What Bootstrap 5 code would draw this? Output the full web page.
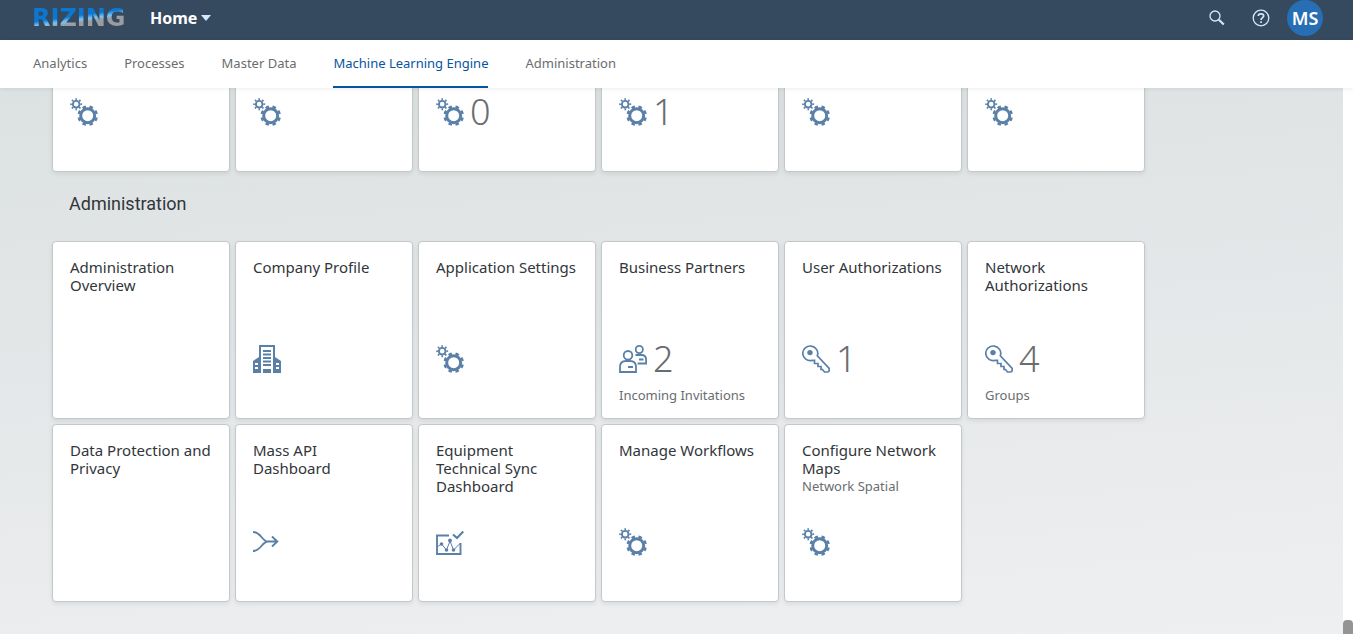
<!DOCTYPE html>
<html lang="en">
<head>
<meta charset="utf-8">
<meta name="viewport" content="width=device-width, initial-scale=1">
<title>Home</title>
<link href="https://cdn.jsdelivr.net/npm/bootstrap@5.3.0/dist/css/bootstrap.min.css" rel="stylesheet">
<style>
  body { font-family: "Noto Sans", "Open Sans", sans-serif; font-size: 14px; color: #32363a; }
  .shell { background: #354a5f; height: 40px; padding: 0 30px 4px 32px; }
  .logo { font: bold 24px/38px "DejaVu Sans", sans-serif; background: linear-gradient(172deg, #0a78d2 42%, #7cc4f4 50%, #9a9ca0 56%); -webkit-background-clip: text; background-clip: text; color: transparent; width: 118px; }
  .home { font-size: 16px; line-height: 36px; font-weight: 700; }
  .caret { width: 10px; height: 6px; }
  .icon-btn { width: 44px; height: 36px; color: #d1e8ff; }
  .avatar { width: 36px; height: 36px; background: #286eb4; font-size: 18px; font-weight: 600; margin-left: 4px; }
  .tabs { height: 48px; padding: 0 33px; gap: 37px; box-shadow: 0 1px 4px rgba(0,0,0,.08); z-index: 2; }
  .tabs a { color: #6a6d70; line-height: 46px; border-bottom: 2px solid transparent; font-size: 13px; }
  .tabs a.active { color: #0854a0; border-color: #0854a0; }
  .page { background: linear-gradient(175deg, #dce1e2, #eeeff1); }
  .content { padding: 0 52px; margin-top: -94px; }
  .tiles { display: grid; grid-template-columns: repeat(auto-fill, 178px); gap: 5px; }
  .tile { height: 178px; padding: 16px 17px 14px; border: 1px solid #c3c8ca; border-radius: 4px; box-shadow: 0 2px 4px rgba(0,0,0,.08); background: #fff; color: #32363a; }
  .tile h3 { font-size: 15px; line-height: 18px; font-weight: 400; margin: 0; }
  .tile p { font-size: 13px; line-height: 18px; color: #6a6d70; margin: 0; }
  .kpi { height: 32px; gap: 6px; margin-bottom: 11px; color: #5b80a8; }
  .kpi strong { font-size: 36px; line-height: 32px; font-weight: 300; color: #6a6d70; }
  .kpi svg { width: 28px; height: 28px; }
  .foot { height: 18px; }
  .group-title { font-family: Roboto, sans-serif; font-size: 18px; line-height: 24px; font-weight: 400; margin: 20px 17px 25px; }
  .track { width: 10px; background: #fff; }
  .thumb { height: 14px; background: #949494; border-radius: 4px 4px 0 0; }
</style>
</head>
<body class="d-flex flex-column vh-100 overflow-hidden">
<svg class="d-none" xmlns="http://www.w3.org/2000/svg">
  <symbol id="gears" viewBox="0 0 28 28"><g fill="none" stroke="currentColor">
    <circle cx="17.7" cy="17.7" r="7" stroke-width="3"/>
    <circle cx="17.7" cy="17.7" r="9.1" stroke-width="2.400" pathLength="80" stroke-dasharray="5 5" transform="rotate(11.25 17.7 17.7)"/>
    <circle cx="6.2" cy="6.2" r="3.3" stroke-width="1.9"/>
    <circle cx="6.2" cy="6.2" r="5" stroke-width="2" pathLength="80" stroke-dasharray="4 6" transform="rotate(-9 6.2 6.2)"/></g></symbol>
  <symbol id="building" viewBox="0 0 28 28"><path fill="currentColor" fill-rule="evenodd" d="M6 0h16v12l6 4v12H0V16l6-4zM8 2v26h2v-4h8v4h2V2zM2 18v2h3v-2zM2 22v2h3v-2zM23 18v2h3v-2zM23 22v2h3v-2zM10 5h8v2h-8zM10 8.500h8v2h-8zM10 12h8v2h-8zM10 15.500h8v2h-8zM10 19h8v2h-8zM12 24h4v2h-4z"/><path fill="currentColor" d="M12 24h4v2h-4z"/></symbol>
  <symbol id="people" viewBox="0 0 28 28"><g fill="none" stroke="currentColor" stroke-width="1.800">
    <circle cx="9" cy="10.300" r="4.300"/><path d="M1 27v-5q0-6 6-6h4q6 0 6 6v5zM9 22h5"/>
    <circle cx="20.300" cy="4.500" r="3.600"/><path d="M16.500 10h6q4.600 0 4.600 4.600V18.500h-8.500M20 14.500h4.500"/></g></symbol>
  <symbol id="key" viewBox="0 0 28 28"><circle cx="8" cy="7.600" r="2.700" fill="currentColor"/><path fill="none" stroke="currentColor" stroke-width="1.700" d="M15.300 10.800A7.500 7.300 0 1 0 10 15.400H12.500V18.500H16V21.500H19V24.500H20.500L22.500 27H25.500Q27.200 27 27.200 25V23.500z"/></symbol>
  <symbol id="merge" viewBox="0 0 28 28"><path fill="none" stroke="currentColor" stroke-width="1.900" d="M0 4C8 4 9 13.500 15 13.500H24M0 23C8 23 9 13.500 15 13.500M19 8.500l5.300 5-5.300 5"/></symbol>
  <symbol id="chart" viewBox="0 0 28 28"><g fill="none" stroke="currentColor"><path stroke-width="1.900" d="M13 7.500H1V26H24.500V15"/><path stroke-width="2.200" d="M17 6.500l4 3.500 6.300-6.500"/><path stroke-width="1" d="M1 19l4.500-3L10.500 22 14 13 17.500 22 24.500 15"/></g><g fill="currentColor"><circle cx="5.500" cy="16" r="1.800"/><circle cx="10.500" cy="22" r="1.800"/><circle cx="14" cy="12.500" r="1.900"/><circle cx="17.500" cy="22" r="1.800"/></g></symbol>
</svg>

<header class="shell d-flex align-items-center flex-shrink-0">
  <a href="#" class="logo text-decoration-none">RIZING</a>
  <button type="button" class="home btn p-0 border-0 text-white d-flex align-items-center gap-1">Home
    <svg class="caret" viewBox="0 0 10 6"><path fill="#d1e8ff" d="M0 0h10L5 6z"/></svg></button>
  <button type="button" class="icon-btn btn p-0 border-0 ms-auto d-flex align-items-center justify-content-center" aria-label="Search"><svg width="16" height="16" viewBox="0 0 16 16" fill="none" stroke="currentColor"><circle cx="6" cy="6" r="5" stroke-width="1.300"/><path stroke-width="2.200" d="M9.800 9.800l5 4.700"/></svg></button>
  <button type="button" class="icon-btn btn p-0 border-0 d-flex align-items-center justify-content-center" aria-label="Help"><svg width="18" height="18" viewBox="0 0 18 18" fill="none" stroke="currentColor"><circle cx="9" cy="9" r="7.800" stroke-width="1.300"/><path stroke-width="1.700" d="M6.300 7Q6.300 4.800 9 4.800T11.700 7C11.700 8.500 9 8.800 9 11M9 12.300v1.700"/></svg></button>
  <button type="button" class="avatar btn p-0 border-0 rounded-circle text-white">MS</button>
</header>

<nav class="tabs d-flex bg-white flex-shrink-0 position-relative">
  <a href="#" class="text-decoration-none">Analytics</a>
  <a href="#" class="text-decoration-none">Processes</a>
  <a href="#" class="text-decoration-none">Master Data</a>
  <a href="#" class="text-decoration-none active" aria-current="page">Machine Learning Engine</a>
  <a href="#" class="text-decoration-none">Administration</a>
</nav>

<div class="d-flex flex-grow-1 overflow-hidden">
  <main class="page flex-grow-1 overflow-hidden">
    <div class="content">
      <section class="tiles">
        <div class="tile d-flex flex-column"><div class="kpi d-flex align-items-center mt-auto"><svg><use href="#gears"/></svg></div><p class="foot"></p></div>
        <div class="tile d-flex flex-column"><div class="kpi d-flex align-items-center mt-auto"><svg><use href="#gears"/></svg></div><p class="foot"></p></div>
        <div class="tile d-flex flex-column"><div class="kpi d-flex align-items-center mt-auto"><svg><use href="#gears"/></svg><strong>0</strong></div><p class="foot"></p></div>
        <div class="tile d-flex flex-column"><div class="kpi d-flex align-items-center mt-auto"><svg><use href="#gears"/></svg><strong>1</strong></div><p class="foot"></p></div>
        <div class="tile d-flex flex-column"><div class="kpi d-flex align-items-center mt-auto"><svg><use href="#gears"/></svg></div><p class="foot"></p></div>
        <div class="tile d-flex flex-column"><div class="kpi d-flex align-items-center mt-auto"><svg><use href="#gears"/></svg></div><p class="foot"></p></div>
      </section>
      <h2 class="group-title">Administration</h2>
      <section class="tiles">
        <a href="#" class="tile d-flex flex-column text-decoration-none"><h3>Administration Overview</h3></a>
        <a href="#" class="tile d-flex flex-column text-decoration-none"><h3>Company Profile</h3><div class="kpi d-flex align-items-center mt-auto"><svg><use href="#building"/></svg></div><p class="foot"></p></a>
        <a href="#" class="tile d-flex flex-column text-decoration-none"><h3>Application Settings</h3><div class="kpi d-flex align-items-center mt-auto"><svg><use href="#gears"/></svg></div><p class="foot"></p></a>
        <a href="#" class="tile d-flex flex-column text-decoration-none"><h3>Business Partners</h3><div class="kpi d-flex align-items-center mt-auto"><svg><use href="#people"/></svg><strong>2</strong></div><p class="foot">Incoming Invitations</p></a>
        <a href="#" class="tile d-flex flex-column text-decoration-none"><h3>User Authorizations</h3><div class="kpi d-flex align-items-center mt-auto"><svg><use href="#key"/></svg><strong>1</strong></div><p class="foot"></p></a>
        <a href="#" class="tile d-flex flex-column text-decoration-none"><h3>Network Authorizations</h3><div class="kpi d-flex align-items-center mt-auto"><svg><use href="#key"/></svg><strong>4</strong></div><p class="foot">Groups</p></a>
        <a href="#" class="tile d-flex flex-column text-decoration-none"><h3>Data Protection and Privacy</h3></a>
        <a href="#" class="tile d-flex flex-column text-decoration-none"><h3>Mass API Dashboard</h3><div class="kpi d-flex align-items-center mt-auto"><svg><use href="#merge"/></svg></div><p class="foot"></p></a>
        <a href="#" class="tile d-flex flex-column text-decoration-none"><h3>Equipment Technical Sync Dashboard</h3><div class="kpi d-flex align-items-center mt-auto"><svg><use href="#chart"/></svg></div><p class="foot"></p></a>
        <a href="#" class="tile d-flex flex-column text-decoration-none"><h3>Manage Workflows</h3><div class="kpi d-flex align-items-center mt-auto"><svg><use href="#gears"/></svg></div><p class="foot"></p></a>
        <a href="#" class="tile d-flex flex-column text-decoration-none"><h3>Configure Network Maps</h3><p>Network Spatial</p><div class="kpi d-flex align-items-center mt-auto"><svg><use href="#gears"/></svg></div><p class="foot"></p></a>
      </section>
    </div>
  </main>
  <div class="track d-flex flex-column justify-content-end flex-shrink-0" aria-hidden="true"><div class="thumb"></div></div>
</div>
<script src="https://cdn.jsdelivr.net/npm/bootstrap@5.3.0/dist/js/bootstrap.bundle.min.js"></script>
</body>
</html>
